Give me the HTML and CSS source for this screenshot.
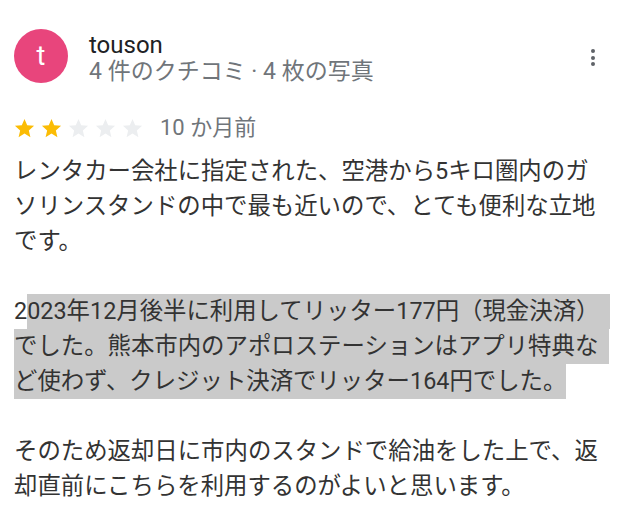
FILE: index.html
```html
<!DOCTYPE html>
<html lang="ja">
<head>
<meta charset="utf-8">
<link rel="stylesheet" href="styles.css">
</head>
<body>
<div class="review">
  <div class="head">
    <div class="avatar">t</div>
    <div class="meta">
      <div class="name">touson</div>
      <div class="sub">4 件のクチコミ · 4 枚の写真</div>
    </div>
    <div class="more"><span class="dot"></span><span class="dot"></span><span class="dot"></span></div>
  </div>
  <div class="rating">
    <div class="stars">
      <svg class="star on" viewBox="0 0 24 24"><path d="M12 17.27L18.18 21l-1.64-7.03L22 9.24l-7.19-.61L12 2 9.19 8.63 2 9.24l5.46 4.73L5.82 21z"/></svg>
      <svg class="star on" viewBox="0 0 24 24"><path d="M12 17.27L18.18 21l-1.64-7.03L22 9.24l-7.19-.61L12 2 9.19 8.63 2 9.24l5.46 4.73L5.82 21z"/></svg>
      <svg class="star off" viewBox="0 0 24 24"><path d="M12 17.27L18.18 21l-1.64-7.03L22 9.24l-7.19-.61L12 2 9.19 8.63 2 9.24l5.46 4.73L5.82 21z"/></svg>
      <svg class="star off" viewBox="0 0 24 24"><path d="M12 17.27L18.18 21l-1.64-7.03L22 9.24l-7.19-.61L12 2 9.19 8.63 2 9.24l5.46 4.73L5.82 21z"/></svg>
      <svg class="star off" viewBox="0 0 24 24"><path d="M12 17.27L18.18 21l-1.64-7.03L22 9.24l-7.19-.61L12 2 9.19 8.63 2 9.24l5.46 4.73L5.82 21z"/></svg>
    </div>
    <span class="when">10 か月前</span>
  </div>
  <div class="text">
    <p class="para">レンタカー会社に指定された、空港から5キロ圏内のガ<br>ソリンスタンドの中で最も近いので、とても便利な立地<br>です。</p>
    <p class="para"><span class="line">2<span class="hl ext">023年12月後半に利用してリッター177円（現金決済）</span></span><span class="line"><span class="hl ext">でした。熊本市内のアポロステーションはアプリ特典な</span></span><span class="line"><span class="hl">ど使わず、クレジット決済でリッター164円でした。</span></span></p>
    <p class="para">そのため返却日に市内のスタンドで給油をした上で、返<br>却直前にこちらを利用するのがよいと思います。</p>
  </div>
</div>
</body>
</html>
```
FILE: styles.css
```css
html, body {
  margin: 0;
  padding: 0;
  background: #ffffff;
}
body {
  width: 640px;
  height: 531px;
  overflow: hidden;
  font-family: "Roboto", "Noto Sans CJK JP", sans-serif;
}
.review {
  padding: 29px 0 0 14px;
}
.head {
  display: flex;
  align-items: flex-start;
}
.avatar {
  width: 54px;
  height: 54px;
  border-radius: 50%;
  background: #e8457c;
  color: #ffffff;
  font-size: 27px;
  line-height: 54px;
  text-align: center;
  flex: none;
}
.meta {
  margin-left: 21px;
  padding-top: 4px;
}
.name {
  font-size: 24px;
  line-height: 25px;
  color: #202124;
}
.sub {
  font-size: 23px;
  line-height: 27px;
  color: #70757a;
  white-space: nowrap;
}
.more {
  margin-left: auto;
  margin-right: 45px;
  margin-top: 20px;
  display: flex;
  flex-direction: column;
  gap: 2.5px;
}
.dot {
  width: 4px;
  height: 4px;
  border-radius: 50%;
  background: #5f6368;
}
.rating {
  display: flex;
  align-items: center;
  height: 24px;
  margin-top: 31px;
}
.stars {
  display: flex;
  gap: 4px;
  margin-left: -1px;
}
.star {
  width: 23px;
  height: 23px;
  display: block;
}
.star.on { fill: #fbbc04; }
.star.off { fill: #eceef0; }
.when {
  margin-left: 16px;
  font-size: 22px;
  color: #70757a;
  line-height: 24px;
}
.text {
  margin-top: 14px;
  font-size: 23.4px;
  line-height: 35px;
  color: #333333;
  white-space: nowrap;
}
.para {
  margin: 0 0 35px 0;
}
.line {
  display: block;
  height: 35px;
}
.hl {
  display: inline-block;
  background: #cacaca;
  vertical-align: top;
}
.hl.ext {
  padding-right: 11px;
}
```
